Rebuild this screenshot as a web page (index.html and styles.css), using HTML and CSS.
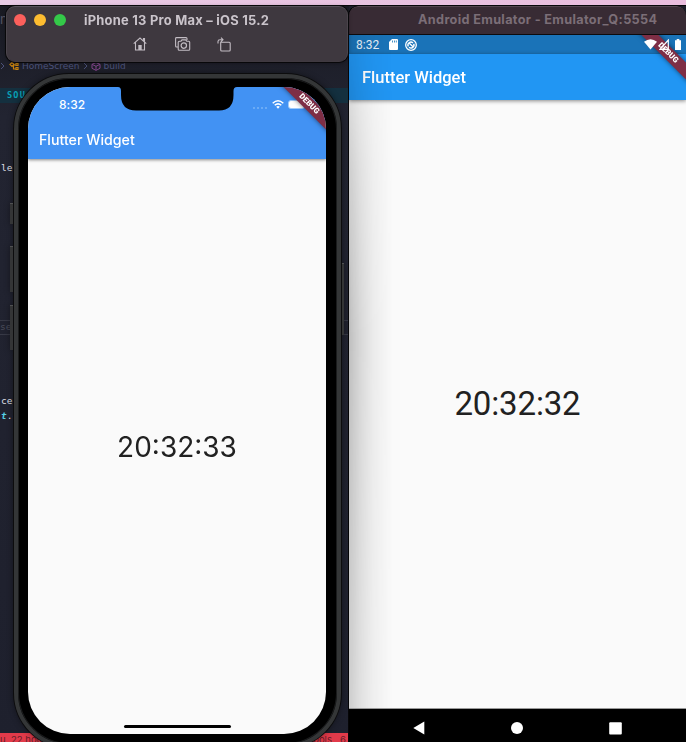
FILE: index.html
```html
<!DOCTYPE html>
<html lang="en">
<head>
<meta charset="utf-8">
<title>Flutter Widget</title>
<link rel="stylesheet" href="styles.css">
</head>
<body>
<div class="desktop">
  <div class="wallpaper"></div>

  <section class="editor">
    <div class="menu-fragment">n</div>
    <div class="breadcrumb">
      <svg width="5" height="8" viewBox="0 0 5 8"><path d="M1 1l3 3-3 3" fill="none" stroke="#4b5178"/></svg>
      <svg class="crumb-class" width="10" height="9" viewBox="0 0 10 9"><path d="M1 2.500l2-2 2 2-2 2zM4 3h3M4.500 3v4h3M7 1.500h2v2H7zM7 5.500h2v2H7z" fill="none" stroke="#c9820e" stroke-width="1.200"/></svg>
      <span>HomeScreen</span>
      <svg width="5" height="8" viewBox="0 0 5 8"><path d="M1 1l3 3-3 3" fill="none" stroke="#4b5178"/></svg>
      <svg class="crumb-method" width="10" height="9" viewBox="0 0 10 9"><path d="M5 .6l4 1.700v4L5 8.400l-4-2.100v-4zM1 2.300l4 2 4-2M5 4.300v4" fill="none" stroke="#86478e"/></svg>
      <span>build</span>
    </div>
    <div class="source-tab">SOU</div>
    <div class="code code-a">le]</div>
    <div class="search">se</div>
    <div class="code code-b">cer</div>
    <div class="code code-c"><i>t</i>.c</div>
    <div class="statusbar"><span>u, 22 hours</span><span class="tools">Tools</span><span class="count">6</span></div>
  </section>

  <section class="emulator">
    <header class="emu-title">Android Emulator - Emulator_Q:5554</header>
    <div class="emu-screen">
      <div class="emu-status">
        <span class="emu-clock">8:32</span>
        <svg class="sd" width="9" height="11" viewBox="0 0 9 11"><path d="M3 0h5q1 0 1 1v9q0 1-1 1H1q-1 0-1-1V3z" fill="#fff"/><path d="M3.500 1.500v2M5.500 1.500v2M7.300 1.500v2" stroke="#1976b8" stroke-width=".8"/></svg>
        <svg class="sync" width="12" height="12" viewBox="0 0 12 12"><circle cx="6" cy="6" r="5.300" fill="none" stroke="#fff" stroke-width="1.300"/><path d="M3.300 7.500A3 3 0 0 1 8 3.900M8.700 4.700A3 3 0 0 1 4 8.200M4 4l4.300 4" fill="none" stroke="#fff" stroke-width="1.400"/></svg>
        <span class="fill"></span>
        <svg class="emu-wifi" width="13" height="11" viewBox="0 0 13 11"><path d="M0 2.800Q6.500-2.300 13 2.800L6.500 10.500z" fill="#fff"/></svg>
        <svg class="emu-cell" width="11" height="11" viewBox="0 0 11 11"><path d="M1 10.300L9.300 1v9.300z" fill="none" stroke="#fff" stroke-width="1.200"/></svg>
        <svg class="emu-batt" width="6" height="11" viewBox="0 0 6 11"><path d="M0 1.300h1.700V0h2.600v1.300H6V11H0z" fill="#fff"/></svg>
      </div>
      <div class="emu-appbar">Flutter Widget</div>
      <main class="emu-body"><span>20:32:32</span></main>
      <div class="banner emu-banner">DEBUG</div>
      <div class="cast-shadow"></div>
    </div>
    <nav class="emu-nav">
      <svg width="12" height="14" viewBox="0 0 12 14"><path d="M11.300.5v13L.3 7z" fill="#fff"/></svg>
      <svg width="12" height="12" viewBox="0 0 12 12"><circle cx="6" cy="6" r="6" fill="#fff"/></svg>
      <svg width="13" height="13" viewBox="0 0 13 13"><rect x=".2" y=".2" width="12.600" height="12.400" rx="1" fill="#fff"/></svg>
    </nav>
  </section>

  <section class="phone">
    <b class="key mute"></b><b class="key vol-up"></b><b class="key vol-down"></b><b class="key power"></b>
    <div class="shell">
      <div class="ios-screen">
        <div class="ios-status">
          <span class="ios-clock">8:32</span>
          <span class="dots"><i></i><i></i><i></i><i></i></span>
          <svg class="ios-wifi" width="12" height="9" viewBox="0 0 12 9"><path d="M.7 3.200Q6-1.600 11.300 3.200M2.700 5.300q3.300-2.900 6.600 0" fill="none" stroke="#fff" stroke-width="1.500"/><path d="M4.200 6.700Q6 5.300 7.800 6.700L6 8.700z" fill="#fff"/></svg>
          <span class="ios-batt"></span>
        </div>
        <div class="ios-appbar">Flutter Widget</div>
        <main class="ios-body"><span>20:32:33</span></main>
        <div class="home-bar"></div>
        <svg class="notch" width="119" height="24" viewBox="0 0 119 24"><path d="M0 0Q3 0 3 4V8Q3 23.500 18 23.500H101Q115.500 23.500 115.500 8V4Q115.500 0 119 0z" fill="#000"/></svg>
        <div class="banner ios-banner">DEBUG</div>
      </div>
    </div>
  </section>

  <header class="sim-window">
    <div class="sim-title">
      <i class="light red"></i><i class="light yellow"></i><i class="light green"></i>
      <span>iPhone 13 Pro Max – iOS 15.2</span>
    </div>
    <div class="sim-tools">
      <svg width="14" height="14" viewBox="0 0 14 14"><path d="M.7 6.700L7 1l6.300 5.700M2.500 5.500V13h9V5.500M10.500 3.500V1.500h1V4.500" fill="none" stroke="#c2bcc3" stroke-width="1.100"/><path d="M5.300 8h3.400v5H5.300z" fill="#c2bcc3"/></svg>
      <svg width="16" height="14" viewBox="0 0 16 14"><path d="M3 10H1.500Q.6 10 .6 9V1.500Q.6.600 1.500.6H11q1 0 1 1V3M4.500 4.200H6l1-1.300h3.700l1 1.300h2q1 0 1 1v7q0 1-1 1H4.200q-1 0-1-1v-7q0-1 1.300-1z" fill="none" stroke="#c2bcc3" stroke-width="1.100"/><circle cx="8.800" cy="8.600" r="2.700" fill="none" stroke="#c2bcc3" stroke-width="1.200"/></svg>
      <svg width="15" height="15" viewBox="0 0 15 15"><path d="M3.700 5.300h8.500q1 0 1 1V13q0 1-1 1H4.700q-1 0-1-1zM1 6.500V4.500Q1 2.700 3 2.700h2.700M4 .7l2 2-2 2" fill="none" stroke="#c2bcc3" stroke-width="1.100"/></svg>
    </div>
  </header>
</div>
</body>
</html>
```
FILE: styles.css
```css
* { box-sizing: border-box; }
body { margin: 0; }
svg { display: block; flex: none; }

.desktop {
  position: relative;
  width: 686px;
  height: 742px;
  overflow: hidden;
  background: #1d1e29;
  font-family: Inter, "Liberation Sans", sans-serif;
}
.wallpaper {
  height: 6px;
  background: linear-gradient(90deg, #e8cbe5, #e9bddd);
  border-bottom: 1px solid #08070a;
}

/* Editor window behind the simulators */
.editor {
  position: absolute;
  inset: 6px 337px 0 0;
  overflow: hidden;
  background: linear-gradient(#191a22, #222431 15%, #1e202d);
  color: #4d547e;
  font-size: 9.5px;
}
.menu-fragment { height: 54px; padding-top: 5px; color: #555463; font-size: 13px; }
.breadcrumb { display: flex; align-items: center; height: 12px; gap: 3px; font-family: "DejaVu Sans", sans-serif; font-size: 9px; }
.breadcrumb svg:first-child { margin-right: 1px; }
.source-tab { margin-top: 16px; height: 15px; padding-left: 7px; background: #14303f; color: #08a0b5; font: bold 8.5px/15px "DejaVu Sans Mono", monospace; letter-spacing: 1.2px; }
.code { padding-left: 1px; height: 15px; color: #dddfe4; font: 9.5px/15px "DejaVu Sans Mono", monospace; }
.code-a { margin-top: 57px; }
.code i { color: #56cfe4; font-weight: bold; }
.search { margin-top: 145px; height: 15px; border: 1px solid #373946; border-width: 1px 0; color: #4b4d5a; font: 9.5px/12px "DejaVu Sans Mono", monospace; }
.code-b { margin-top: 58px; }
.statusbar { position: absolute; inset: auto 0 0 0; height: 9px; display: flex; background: #e23a4a; color: #651e29; font-size: 9.5px; line-height: 14px; white-space: nowrap; }
.tools { margin-left: 257px; }
.count { margin-left: 8px; }

/* Android emulator window */
.emulator {
  position: absolute;
  left: 349px;
  top: 6px;
  width: 337px;
  height: 736px;
  display: flex;
  flex-direction: column;
  overflow: hidden;
  border-radius: 9px 9px 0 0;
  background: #000;
  box-shadow: -1px 0 #050507;
}
.emu-title {
  height: 29px;
  padding-left: 69px;
  border: solid #54464f;
  border-width: 1px 0 0;
  border-bottom: 1px solid #0d0a0c;
  border-radius: 9px 9px 0 0;
  background: #382b34;
  color: #7b6e77;
  font-size: 12.7px;
  font-weight: 700;
  line-height: 26px;
  letter-spacing: .34px;
  white-space: nowrap;
}
.emu-screen { position: relative; flex: none; height: 674px; display: flex; flex-direction: column; overflow: hidden; background: #fafafa; border-bottom: 1px solid #999; }
.emu-status { display: flex; align-items: center; height: 19px; padding: 0 5px 0 7px; background: #1a73b8; }
.emu-status svg { position: relative; z-index: 3; }
.emu-clock { width: 33px; color: #e5eff7; font: 12px/18px Roboto, sans-serif; }
.sync { margin-left: 7px; }
.fill { flex: 1; }
.emu-cell { margin-left: 2px; }
.emu-batt { margin-left: 5px; }
.emu-appbar { height: 46px; padding-left: 13px; background: #2196f3; color: #fff; font: 500 16.5px/47px Roboto, sans-serif; box-shadow: 0 1px 4px #0007; z-index: 1; }
.emu-body { flex: 1; display: flex; align-items: center; justify-content: center; color: #212121; font: 33px/40px Roboto, sans-serif; }
.emu-body span { letter-spacing: -.15px; }
.cast-shadow {
  position: absolute;
  z-index: 3;
  inset: 0 auto 0 0;
  width: 44px;
  background: linear-gradient(90deg, #0000003d, #00000024 24%, #0000000f 55%, #0000);
  -webkit-mask-image: linear-gradient(#0005, #000b 20%, #000 45%, #000b);
  mask-image: linear-gradient(#0005, #000b 20%, #000 45%, #000b);
}
.emu-nav { display: flex; align-items: center; justify-content: space-between; flex: 1; padding: 5px 64px 0; background: #000; }

.banner {
  position: absolute;
  z-index: 2;
  width: 120px;
  height: 12px;
  background: #7e2e45;
  box-shadow: 0 0 5px #0008;
  color: #fff;
  font: 900 7.8px/12px Roboto, sans-serif;
  text-align: center;
  transform: rotate(45deg);
}
.emu-banner { right: -42px; top: 12px; }

/* iPhone body */
.phone { position: absolute; left: 14px; top: 74px; width: 327px; height: 674px; filter: drop-shadow(0 0 3px #0006); }
.shell {
  position: relative;
  height: 100%;
  padding: 9px 10px;
  border: 4px solid #343637;
  border-radius: 55px;
  background: #000;
  box-shadow: inset 0 0 0 1px #1b1c1d, 0 0 0 1px #0c0c0d;
}
.key { position: absolute; left: -4px; width: 5px; background: #343536; border-top: 1px solid #505152; }
.mute { top: 129px; height: 21px; }
.vol-up { top: 172px; height: 46px; }
.vol-down { top: 231px; height: 45px; }
.power { left: 326px; top: 189px; width: 4px; height: 72px; }
.ios-screen { position: relative; display: flex; flex-direction: column; width: 298px; height: 647px; overflow: hidden; border-radius: 42px; background: #fafafa; }
.ios-status { display: flex; align-items: center; height: 34px; padding: 0 21px 0 31px; background: #4292f3; color: #fff; }
.ios-clock { flex: 1; font-size: 12px; font-weight: 500; letter-spacing: .05px; }
.dots { display: flex; gap: 2px; margin: 7px 5px 0 0; }
.dots i { width: 2px; height: 2px; background: #79b3f7; border-radius: 1px; }
.ios-batt { position: relative; z-index: 3; width: 17px; height: 9px; margin-left: 4px; border: 1px solid #9fcafa; border-radius: 3px; background: #fff; }
.ios-banner { z-index: 4; }
.ios-appbar { height: 38px; padding-left: 11px; background: #4292f3; color: #fff; font-size: 14.2px; font-weight: 500; line-height: 38px; box-shadow: 0 1px 3px #0007; clip-path: inset(0 0 -6px 0); }
.ios-body { flex: 1; display: flex; align-items: center; justify-content: center; color: #212121; font-size: 28px; line-height: 34px; }
.home-bar { position: absolute; left: 96px; bottom: 6px; width: 107px; height: 3px; border-radius: 2px; background: #000; }
.notch { position: absolute; left: 90px; top: 0; }
.ios-banner { right: -43px; top: 11px; }

/* Simulator title and tool bar */
.sim-window {
  position: absolute;
  left: 6px;
  top: 6px;
  width: 342px;
  height: 56px;
  border: 1px solid #5b555c;
  border-color: #57515a #4b454c #403a41;
  border-radius: 9px;
  background: #3e383f;
  box-shadow: 0 0 0 1px #08080a, 0 1px 4px #0006;
}
.sim-title { display: flex; align-items: center; height: 26px; padding-left: 7px; gap: 8px; color: #cac4cb; font-size: 12.9px; font-weight: 700; white-space: nowrap; }
.sim-title span { margin-left: 10px; letter-spacing: .25px; }
.light { width: 12px; height: 12px; border-radius: 50%; }
.red { background: #fc605c; }
.yellow { background: #fdbc30; }
.green { background: #34c949; }
.sim-tools { display: flex; gap: 28px; align-items: center; height: 22px; padding-left: 126px; }
.sim-tools svg:last-child { margin-left: -2px; }
```
